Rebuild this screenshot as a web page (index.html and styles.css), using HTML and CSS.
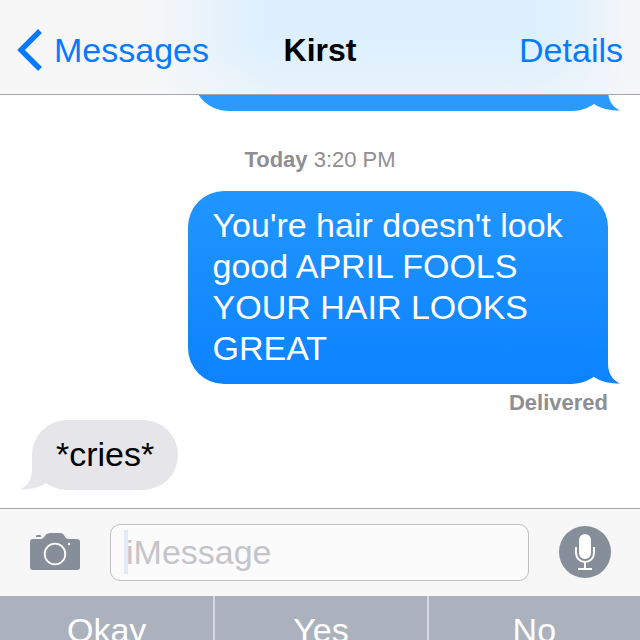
FILE: index.html
```html
<!DOCTYPE html>
<html lang="en">
<head>
<meta charset="utf-8">
<meta name="viewport" content="width=device-width, initial-scale=1">
<title>Kirst</title>
<link rel="stylesheet" href="styles.css">
</head>
<body>
<header class="nav">
  <a class="nav-back" href="#messages">
    <svg class="chevron" viewBox="0 0 25 42" aria-hidden="true"><path d="M23 2 4 21l19 19" fill="none" stroke="currentColor" stroke-width="5.4"/></svg>
    <span>Messages</span>
  </a>
  <h1 class="nav-title">Kirst</h1>
  <a class="nav-details" href="#details">Details</a>
</header>

<main class="thread">
  <div class="bubble sent earlier">
    <svg class="tail" viewBox="0 0 50 36" aria-hidden="true"><path d="M14 0H38V15C38 24 41 31 50 35.500C40 35.500 32 34 24 29L14 20Z" fill="currentColor"/></svg>
  </div>
  <p class="stamp"><b>Today</b> 3:20 PM</p>
  <div class="bubble sent latest">
    You're hair doesn't look good APRIL FOOLS YOUR HAIR LOOKS GREAT
    <svg class="tail" viewBox="0 0 50 36" aria-hidden="true"><path d="M14 0H38V15C38 24 41 31 50 35.500C40 35.500 32 34 24 29L14 20Z" fill="currentColor"/></svg>
  </div>
  <p class="status">Delivered</p>
  <div class="bubble received">
    *cries*
    <svg class="tail" viewBox="0 0 50 36" aria-hidden="true"><path d="M36 0H12V15C12 24 9 31 0 35.500C10 35.500 18 34 26 29L36 20Z" fill="currentColor"/></svg>
  </div>
</main>

<form class="composer">
  <button class="icon-button camera" type="button" aria-label="Camera">
    <svg viewBox="0 0 50 39" aria-hidden="true">
      <path d="M3 6H11C14 6 15 1 18 0.500Q19 0 20 0H30Q32 0 33 1L36 5Q37 6 39 6H47Q50 6 50 9V34Q50 37 47 37H3Q0 37 0 34V9Q0 6 3 6Z" fill="#868e99"/>
      <path d="M6 4V3Q6 2 7 2H10Q11 2 11 3V4Z" fill="#868e99"/>
      <circle cx="25" cy="21" r="10.300" fill="none" stroke="#fff" stroke-width="1.800"/>
      <circle cx="39" cy="11" r="1.200" fill="#fff"/>
    </svg>
  </button>
  <div class="field">
    <input class="message" type="text" placeholder="iMessage" aria-label="iMessage">
  </div>
  <button class="icon-button mic" type="button" aria-label="Dictate">
    <svg viewBox="0 0 52 53" aria-hidden="true">
      <circle cx="26" cy="26" r="26" fill="#868e99"/>
      <rect x="20" y="8" width="12" height="25" rx="6" fill="#fff"/>
      <path d="M17 21V27A9 9 0 0 0 35 27V21M26 36V43M19 43H33" fill="none" stroke="#fff" stroke-width="2"/>
    </svg>
  </button>
</form>

<div class="suggestions">
  <button class="suggestion" type="button">Okay</button>
  <button class="suggestion" type="button">Yes</button>
  <button class="suggestion" type="button">No</button>
</div>
</body>
</html>
```
FILE: styles.css
```css
* {
  box-sizing: border-box;
}

body {
  display: flex;
  flex-direction: column;
  height: 100vh;
  margin: 0;
  overflow: hidden;
  background: #fff;
  color: #000;
  font: 34px/41px "Liberation Sans", Arial, sans-serif;
}

button,
input {
  margin: 0;
  padding: 0;
  border: 0;
  background: none;
  font: inherit;
}

.nav {
  flex: none;
  display: grid;
  grid-template-columns: 1fr auto 1fr;
  align-items: center;
  padding: 29px 17px 23px;
  border-bottom: 1px solid #a5a5a9;
  background:
    linear-gradient(to bottom, rgba(247, 247, 247, 0) 45%, rgba(247, 247, 247, 0.5)),
    linear-gradient(to right, #f7f7f7 23%, #e5f2fc 35%, #dcf0ff 42%, #dcf0ff 84%, #e5f2fc 91%, #f4f5f8 98%);
}

.nav a {
  color: #087aff;
  text-decoration: none;
}

.nav-back {
  display: flex;
  align-items: center;
  gap: 12px;
}

.chevron {
  width: 25px;
  height: 42px;
}

.nav-title {
  margin: 0;
  font-size: 32px;
  font-weight: bold;
}

.nav-details {
  justify-self: end;
}

.thread {
  flex: 1;
  min-height: 0;
  display: flex;
  flex-direction: column;
  justify-content: flex-end;
  padding: 0 32px 18px;
  overflow: hidden;
}

.bubble {
  position: relative;
  flex: none;
  max-width: 73%;
  min-height: 70px;
  padding: 14px 24px 15px;
  border-radius: 36px;
}

.sent {
  align-self: flex-end;
  color: #fff;
}

.earlier {
  width: 72%;
  background: #299bff;
}

.latest {
  padding-left: 25px;
  background: linear-gradient(#2196ff, #0c82ff);
}

.received {
  align-self: flex-start;
  background: #e5e5ea;
}

.tail {
  position: absolute;
  bottom: 0;
  width: 50px;
  height: 36px;
}

.sent .tail {
  right: -12px;
}

.earlier .tail {
  color: #299bff;
}

.latest .tail {
  color: #0e84ff;
}

.received .tail {
  left: -12px;
  color: #e5e5ea;
}

.stamp,
.status {
  flex: none;
  color: #8e8e93;
  font-size: 22px;
  line-height: 26px;
}

.stamp {
  margin: 36px 0 18px;
  text-align: center;
}

.status {
  margin: 6px 0 4px;
  font-weight: bold;
  text-align: right;
}

.composer {
  flex: none;
  display: flex;
  align-items: center;
  gap: 30px;
  margin: 0;
  padding: 15px 29px 15px 30px;
  border-top: 1px solid #a5a5a9;
  background: #f7f7f8;
}

.icon-button {
  flex: none;
}

.icon-button svg {
  display: block;
  width: 100%;
}

.camera {
  width: 50px;
}

.mic {
  width: 52px;
}

.field {
  position: relative;
  flex: 1;
  min-width: 0;
}

.field::before {
  content: "";
  position: absolute;
  top: 6px;
  bottom: 7px;
  left: 14px;
  width: 4px;
  background: #e3eafa;
}

.message {
  display: block;
  width: 100%;
  height: 57px;
  padding: 0 15px;
  border: 1px solid #bfbfc4;
  border-radius: 10px;
  background: #fbfbfc;
}

.message::placeholder {
  color: #c5c5c9;
  opacity: 1;
}

.suggestions {
  flex: none;
  display: grid;
  grid-template-columns: repeat(3, 1fr);
  height: 44px;
  overflow: hidden;
  background: #acb2bd;
}

.suggestion {
  padding: 14px 0;
  color: #fff;
}

.suggestion + .suggestion {
  border-left: 2px solid #d2d7e0;
}
```
